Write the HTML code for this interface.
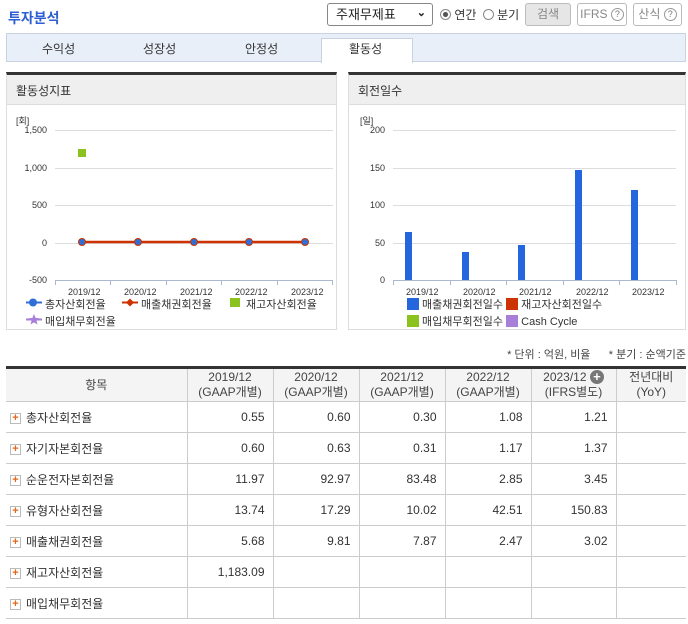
<!DOCTYPE html>
<html><head><meta charset="utf-8"><style>
*{margin:0;padding:0;box-sizing:border-box}
body{width:688px;height:624px;background:#fff;font-family:"Liberation Sans","Noto Sans CJK KR",sans-serif;font-size:12px;color:#333;position:relative;overflow:hidden}
.a{position:absolute}
.title{left:8px;top:8px;font-size:14px;font-weight:bold;color:#2d5fd3}
.sel{left:327px;top:3px;width:106px;height:23px;border:1px solid #888;border-radius:3px;padding:2px 8px;font-size:13px;color:#222;line-height:17px}
.btn{top:3px;height:23px;border:1px solid #bbb;border-radius:3px;font-size:12px;color:#888;text-align:center;line-height:21px}
.q{display:inline-block;width:13px;height:13px;border:1px solid #999;border-radius:50%;font-size:9px;line-height:11px;color:#777;vertical-align:middle}
.tabs{left:6px;top:33px;width:680px;height:29px;background:#e9eff9;border:1px solid #c8d2e0}
.tab{top:40px;font-size:12px;color:#333}
.panel{top:72px;height:258px;border:1px solid #ddd;border-top:3px solid #333}
.ph{height:30px;background:#efefef;border-bottom:1px solid #ddd;padding:7px 9px;font-size:12px}
.ax{font-size:9px;color:#333;text-align:right;width:40px}
.xl{font-size:9px;color:#333}
.lg{font-size:11px;color:#333;white-space:nowrap}
table{position:absolute;left:6px;top:366px;width:680px;border-collapse:collapse;border-top:3px solid #333}
td,th{border:1px solid #ccc;height:31px;font-size:12px;font-weight:normal}
th{background:#f4f4f4;height:34px;line-height:15px;color:#444}
tr td:first-child,tr th:first-child{border-left:none}
tr td:last-child,tr th:last-child{border-right:none}
td{text-align:right;padding-right:8px}
td.l{text-align:left;padding-left:4px}
.pl{display:inline-block;width:11px;height:11px;border:1px solid #bbb;background:#fff;color:#e8641b;font-size:11px;line-height:9px;text-align:center;font-weight:bold;vertical-align:middle;margin-right:5px}
</style></head><body>
<div class="a title">투자분석</div>
<div class="a sel">주재무제표<span style="position:absolute;right:6px;top:1px;font-size:11px;font-weight:bold">&#8964;</span></div>
<div class="a" style="left:440px;top:6px;font-size:12px"><span style="display:inline-block;width:11px;height:11px;border:1px solid #888;border-radius:50%;vertical-align:-1px;background:radial-gradient(#555 35%,#fff 45%)"></span> 연간 <span style="display:inline-block;width:11px;height:11px;border:1px solid #888;border-radius:50%;vertical-align:-1px;margin-left:3px"></span> 분기</div>
<div class="a btn" style="left:525px;width:46px;background:#e6e6e6">검색</div>
<div class="a btn" style="left:577px;width:50px">IFRS <span class="q">?</span></div>
<div class="a btn" style="left:633px;width:49px">산식 <span class="q">?</span></div>
<div class="a tabs"></div>
<div class="a" style="left:321px;top:38px;width:92px;height:25px;background:#fff;border:1px solid #c8d2e0;border-bottom:none"></div>
<div class="a tab" style="left:42px">수익성</div>
<div class="a tab" style="left:143px">성장성</div>
<div class="a tab" style="left:245px">안정성</div>
<div class="a tab" style="left:349px">활동성</div>

<div class="a panel" style="left:6px;width:331px"><div class="ph">활동성지표</div></div>
<div class="a panel" style="left:348px;width:338px"><div class="ph">회전일수</div></div>

<svg class="a" style="left:0;top:0" width="688" height="340">
<g stroke="#ddd" stroke-width="1">
<line x1="55" y1="130.5" x2="333" y2="130.5"/><line x1="55" y1="168.5" x2="333" y2="168.5"/><line x1="55" y1="205.5" x2="333" y2="205.5"/><line x1="55" y1="243.5" x2="333" y2="243.5"/>
<line x1="393" y1="130.5" x2="676" y2="130.5"/><line x1="393" y1="168.5" x2="676" y2="168.5"/><line x1="393" y1="205.5" x2="676" y2="205.5"/><line x1="393" y1="243.5" x2="676" y2="243.5"/>
</g>
<g stroke="#aab8d0"><line x1="55" y1="280.5" x2="333" y2="280.5"/><line x1="393" y1="280.5" x2="676" y2="280.5"/>
<line x1="55.5" y1="280" x2="55.5" y2="285"/><line x1="110.5" y1="280" x2="110.5" y2="285"/><line x1="166.5" y1="280" x2="166.5" y2="285"/><line x1="221.5" y1="280" x2="221.5" y2="285"/><line x1="277.5" y1="280" x2="277.5" y2="285"/><line x1="332.5" y1="280" x2="332.5" y2="285"/>
<line x1="393.5" y1="280" x2="393.5" y2="285"/><line x1="450.5" y1="280" x2="450.5" y2="285"/><line x1="506.5" y1="280" x2="506.5" y2="285"/><line x1="563.5" y1="280" x2="563.5" y2="285"/><line x1="619.5" y1="280" x2="619.5" y2="285"/><line x1="676.5" y1="280" x2="676.5" y2="285"/></g>
<rect x="78" y="149" width="8" height="8" fill="#8cc21e"/>
<polyline points="82,242 138,242 194,242 249,242 305,242" fill="none" stroke="#cc3300" stroke-width="2.5"/>
<g fill="#2f6fd6" stroke="#cc3300" stroke-width="1"><circle cx="82" cy="242" r="3.5"/><circle cx="138" cy="242" r="3.5"/><circle cx="194" cy="242" r="3.5"/><circle cx="249" cy="242" r="3.5"/><circle cx="305" cy="242" r="3.5"/></g>
<g fill="#2466dd">
<rect x="405" y="232" width="7" height="48"/><rect x="462" y="252" width="7" height="28"/><rect x="518" y="245" width="7" height="35"/><rect x="575" y="170" width="7" height="110"/><rect x="631" y="190" width="7" height="90"/>
</g>
<!-- left legend markers -->
<line x1="26" y1="302.5" x2="42" y2="302.5" stroke="#2f6fd6" stroke-width="2"/><circle cx="33" cy="302.5" r="4" fill="#2f6fd6"/>
<line x1="122" y1="302.5" x2="138" y2="302.5" stroke="#cc3300" stroke-width="2"/><path d="M130 298.5 L134 302.5 L130 306.5 L126 302.5Z" fill="#cc3300"/>
<rect x="230" y="298" width="10" height="9" fill="#8cc21e"/>
<line x1="26" y1="319.5" x2="42" y2="319.5" stroke="#a77fd8" stroke-width="2"/><path d="M34 314 L35.6 318 L39.5 318.3 L36.5 320.8 L37.5 324.5 L34 322.4 L30.5 324.5 L31.5 320.8 L28.5 318.3 L32.4 318Z" fill="#a77fd8"/>
</svg>
<div class="a" style="left:16px;top:114px;font-size:9px">[회]</div>
<div class="a ax" style="left:7px;top:125px">1,500</div>
<div class="a ax" style="left:7px;top:163px">1,000</div>
<div class="a ax" style="left:7px;top:200px">500</div>
<div class="a ax" style="left:7px;top:238px">0</div>
<div class="a ax" style="left:7px;top:275px">-500</div>
<div class="a xl" style="left:68px;top:287px">2019/12</div>
<div class="a xl" style="left:124px;top:287px">2020/12</div>
<div class="a xl" style="left:180px;top:287px">2021/12</div>
<div class="a xl" style="left:235px;top:287px">2022/12</div>
<div class="a xl" style="left:291px;top:287px">2023/12</div>
<div class="a lg" style="left:45px;top:296px">총자산회전율</div>
<div class="a lg" style="left:141px;top:296px">매출채권회전율</div>
<div class="a lg" style="left:246px;top:296px">재고자산회전율</div>
<div class="a lg" style="left:45px;top:313px">매입채무회전율</div>

<div class="a" style="left:360px;top:114px;font-size:9px">[일]</div>
<div class="a ax" style="left:345px;top:125px">200</div>
<div class="a ax" style="left:345px;top:163px">150</div>
<div class="a ax" style="left:345px;top:200px">100</div>
<div class="a ax" style="left:345px;top:238px">50</div>
<div class="a ax" style="left:345px;top:275px">0</div>
<div class="a xl" style="left:406px;top:287px">2019/12</div>
<div class="a xl" style="left:463px;top:287px">2020/12</div>
<div class="a xl" style="left:519px;top:287px">2021/12</div>
<div class="a xl" style="left:576px;top:287px">2022/12</div>
<div class="a xl" style="left:632px;top:287px">2023/12</div>
<div class="a lg" style="left:407px;top:296px"><span style="display:inline-block;width:12px;height:12px;background:#2466dd;vertical-align:-2px"></span> 매출채권회전일수 <span style="display:inline-block;width:12px;height:12px;background:#cc3300;vertical-align:-2px"></span> 재고자산회전일수</div>
<div class="a lg" style="left:407px;top:313px"><span style="display:inline-block;width:12px;height:12px;background:#8cc21e;vertical-align:-2px"></span> 매입채무회전일수 <span style="display:inline-block;width:12px;height:12px;background:#a77fd8;vertical-align:-2px"></span> Cash Cycle</div>

<div class="a" style="right:2px;top:346px;font-size:11px;color:#444">* 단위 : 억원, 비율 &nbsp;&nbsp;&nbsp;&nbsp; * 분기 : 순액기준</div>

<table>
<tr><th style="width:181px">항목</th><th style="width:86px">2019/12<br>(GAAP개별)</th><th style="width:86px">2020/12<br>(GAAP개별)</th><th style="width:86px">2021/12<br>(GAAP개별)</th><th style="width:86px">2022/12<br>(GAAP개별)</th><th style="width:85px">2023/12 <span style="display:inline-block;width:14px;height:14px;border-radius:50%;background:#777;color:#fff;font-size:13px;line-height:14px;font-weight:bold">+</span><br>(IFRS별도)</th><th>전년대비<br>(YoY)</th></tr>
<tr><td class="l"><span class="pl">+</span>총자산회전율</td><td>0.55</td><td>0.60</td><td>0.30</td><td>1.08</td><td>1.21</td><td></td></tr>
<tr><td class="l"><span class="pl">+</span>자기자본회전율</td><td>0.60</td><td>0.63</td><td>0.31</td><td>1.17</td><td>1.37</td><td></td></tr>
<tr><td class="l"><span class="pl">+</span>순운전자본회전율</td><td>11.97</td><td>92.97</td><td>83.48</td><td>2.85</td><td>3.45</td><td></td></tr>
<tr><td class="l"><span class="pl">+</span>유형자산회전율</td><td>13.74</td><td>17.29</td><td>10.02</td><td>42.51</td><td>150.83</td><td></td></tr>
<tr><td class="l"><span class="pl">+</span>매출채권회전율</td><td>5.68</td><td>9.81</td><td>7.87</td><td>2.47</td><td>3.02</td><td></td></tr>
<tr><td class="l"><span class="pl">+</span>재고자산회전율</td><td>1,183.09</td><td></td><td></td><td></td><td></td><td></td></tr>
<tr><td class="l"><span class="pl">+</span>매입채무회전율</td><td></td><td></td><td></td><td></td><td></td><td></td></tr>
</table>
</body></html>
